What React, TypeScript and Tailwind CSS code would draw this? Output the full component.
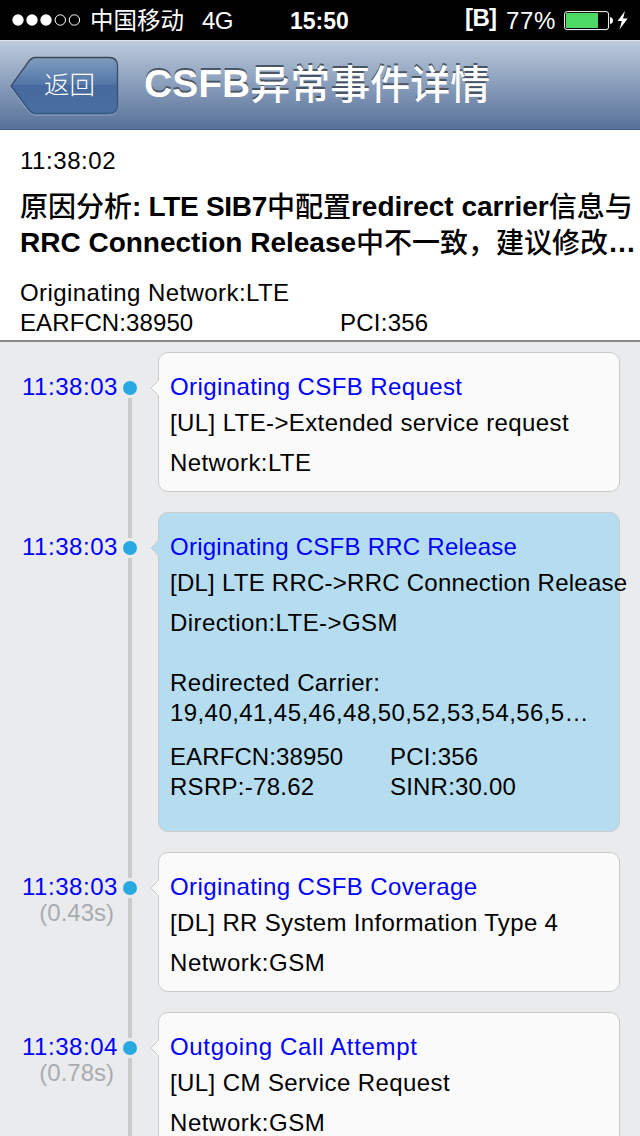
import type { ReactNode } from "react";

type TimelineEvent = {
  time: string;
  delta?: string;
  title: string;
  message: string;
  detail: string;
  selected?: boolean;
  tracking: [string, string, string];
};

const events: TimelineEvent[] = [
  {
    time: "11:38:03",
    title: "Originating CSFB Request",
    message: "[UL] LTE->Extended service request",
    detail: "Network:LTE",
    tracking: ["tracking-[0.4px]", "tracking-[0.39px]", "tracking-[0.4px]"],
  },
  {
    time: "11:38:03",
    title: "Originating CSFB RRC Release",
    message: "[DL] LTE RRC->RRC Connection Release",
    detail: "Direction:LTE->GSM",
    selected: true,
    tracking: ["tracking-[0.25px]", "tracking-[0.25px]", "tracking-[0.42px]"],
  },
  {
    time: "11:38:03",
    delta: "(0.43s)",
    title: "Originating CSFB Coverage",
    message: "[DL] RR System Information Type 4",
    detail: "Network:GSM",
    tracking: ["tracking-[0.4px]", "tracking-[0.34px]", "tracking-[0.55px]"],
  },
  {
    time: "11:38:04",
    delta: "(0.78s)",
    title: "Outgoing Call Attempt",
    message: "[UL] CM Service Request",
    detail: "Network:GSM",
    tracking: ["tracking-[0.67px]", "tracking-[0.4px]", "tracking-[0.55px]"],
  },
];

function StatusBar() {
  return (
    <div className="flex h-10 shrink-0 items-center bg-black text-[24px] leading-10 text-white">
      <svg className="ml-3 h-3 w-[70px] shrink-0" viewBox="0 0 70 12">
        {[6, 20, 34].map((x) => (
          <circle key={x} cx={x} cy="6" r="5.7" fill="white" />
        ))}
        {[48.3, 62.4].map((x) => (
          <circle key={x} cx={x} cy="6" r="5.2" fill="none" stroke="white" />
        ))}
      </svg>
      <span className="ml-2 w-[112px] pt-0.5 text-[23.5px] leading-[38px] font-normal">中国移动</span>
      <span className="w-[88px] pt-0.5 leading-[38px] tracking-[-0.5px]">4G</span>
      <span className="w-[175px] pt-0.5 text-[23px] leading-[38px] font-bold">15:50</span>
      <span className="w-[41px] pb-1 text-[24px] font-bold tracking-[-0.6px]">[B]</span>
      <span className="w-[58px] pt-0.5 leading-[38px] tracking-[0.7px]">77%</span>
      <svg className="h-6 w-[66px] shrink-0" viewBox="0 0 66 24">
        <rect x="0.6" y="3.6" width="44" height="18" rx="2.5" fill="none" stroke="white" />
        <rect x="2" y="5" width="32" height="15" fill="#4cd964" />
        <path d="M46 9q3 .5 3 3.5t-3 3.500z" fill="white" />
        <path d="M61 3l-7.500 10h4.300l-2.300 8.500 8.200-11h-4.600z" fill="white" />
      </svg>
    </div>
  );
}

function NavBar() {
  return (
    <div className="flex h-[90px] shrink-0 items-start border-t border-b border-t-[#dde3ea] border-b-[#415e8d] bg-linear-to-b from-[#bdcbdc] to-[#577199]">
      <div className="mt-[15px] ml-[10px] grid h-[60px] w-[109px]">
        <svg className="col-start-1 row-start-1" width="109" height="60" viewBox="0 0 109 60">
          <defs>
            <linearGradient id="back" x1="0" y1="0" x2="0" y2="1">
              <stop offset="0" stopColor="#809dc0" />
              <stop offset=".49" stopColor="#5275a7" />
              <stop offset=".5" stopColor="#466a9d" />
              <stop offset="1" stopColor="#496d9e" />
            </linearGradient>
            <linearGradient id="edge" x1="0" y1="0" x2="0" y2="1">
              <stop offset="0" stopColor="#3a4656" />
              <stop offset="1" stopColor="#34588a" />
            </linearGradient>
          </defs>
          <path d="M25 2H99q8 0 8 8V51q0 8-8 8H25q-4 0-7-4L.7 31.500 18 7q3-4 7-4z" fill="none" stroke="#93a6c0" />
          <path d="M25 1.500H99q8.500 0 8.500 8.500V49q0 8.500-8.500 8.500H25q-3 0-6-3.500L1 30 19 5q3-3.500 6-3.500z" fill="url(#back)" stroke="url(#edge)" strokeWidth="1.300" />
        </svg>
        <span className="z-10 col-start-1 row-start-1 self-center pb-0.5 pl-[34px] text-[25.5px] leading-[30px] font-light text-white">返回</span>
      </div>
      <h1 className="ml-[25px] pt-[13px] text-[40px] leading-[60px] font-bold whitespace-nowrap text-white [text-shadow:0_-2px_0_#4b5665]">
        <span className="relative -top-px text-[39px]">CSFB</span>
        <span className="relative top-px font-medium">异常事件详情</span>
      </h1>
    </div>
  );
}

function Cjk({ children }: { children: ReactNode }) {
  return <span className="relative top-px font-medium tracking-normal">{children}</span>;
}

function Summary() {
  return (
    <div className="flex h-[212px] shrink-0 flex-col border-b-2 border-[#8a8a8a] bg-white pt-4 pl-5 whitespace-nowrap">
      <span className="leading-[30px] tracking-[0.55px]">11:38:02</span>
      <div className="mt-[13px] text-[28px] leading-9 font-bold">
        <div>
          <Cjk>原因分析</Cjk>
          <span className="tracking-[-0.3px]">: LTE SIB7</span>
          <Cjk>中配置</Cjk>redirect carrier<Cjk>信息与</Cjk>
        </div>
        <div>
          RRC Connection Release<Cjk>中不一致，建议修改</Cjk>…
        </div>
      </div>
      <span className="mt-[17px] leading-[30px] tracking-[0.43px]">Originating Network:LTE</span>
      <div className="grid grid-cols-[320px_1fr] leading-[30px]">
        <span className="tracking-[0.1px]">EARFCN:38950</span>
        <span className="tracking-[0.25px]">PCI:356</span>
      </div>
    </div>
  );
}

function EventRow({ event }: { event: TimelineEvent }) {
  const { selected, tracking } = event;
  return (
    <div className="flex shrink-0">
      <div className="flex w-[118px] flex-col items-end leading-[26px] whitespace-nowrap">
        <span className="-mt-1 tracking-[0.55px] text-[#0000fe]">{event.time}</span>
        {event.delta && <span className="pr-[4px] text-[#a9abb0]">{event.delta}</span>}
      </div>
      <div className="ml-[5px] flex w-[14px] flex-col items-center">
        <div className="flex h-5 items-center">
          <i className="size-[14px] rounded-full bg-[#29a9e1]" />
        </div>
        <div className="w-1 flex-1 bg-[#cbcbcb]" />
      </div>
      <div
        className={`relative mt-[-26px] mb-[46px] ml-[21px] flex w-[462px] flex-col rounded-[10px] border border-[#cbcbcb] px-[11px] pt-[19px] leading-[30px] whitespace-nowrap ${
          selected ? "h-[320px] bg-[#b5ddef]" : "h-[140px] bg-[#fafafa]"
        }`}
      >
        <svg
          className={`absolute top-[26px] left-[-9px] ${selected ? "text-[#b5ddef]" : "text-[#fafafa]"}`}
          width="10"
          height="18"
          viewBox="0 0 10 18"
        >
          <path d="M9 1L1 9l8 8" fill="currentColor" stroke="#cbcbcb" />
          <path d="M8.500 2h1.500v14h-1.500z" fill="currentColor" />
        </svg>
        <span className={`text-[#0000fe] ${tracking[0]}`}>{event.title}</span>
        <span className={`mt-1.5 ${tracking[1]}`}>{event.message}</span>
        <span className={`mt-2.5 ${tracking[2]}`}>{event.detail}</span>
        {selected && (
          <>
            <span className="mt-[30px] tracking-[0.4px]">Redirected Carrier:</span>
            <span className="tracking-[0.42px]">19,40,41,45,46,48,50,52,53,54,56,5…</span>
            <div className="mt-3.5 grid grid-cols-[220px_1fr]">
              <span className="tracking-[0.1px]">EARFCN:38950</span>
              <span className="tracking-[0.25px]">PCI:356</span>
              <span className="tracking-[0.28px]">RSRP:-78.62</span>
              <span className="tracking-[0.2px]">SINR:30.00</span>
            </div>
          </>
        )}
      </div>
    </div>
  );
}

export default function App() {
  return (
    <div className="flex h-[1136px] w-[640px] flex-col overflow-hidden bg-[#eaebed] font-['Liberation_Sans','Noto_Sans_CJK_SC',sans-serif] text-[24px] text-black">
      <StatusBar />
      <NavBar />
      <Summary />
      <div className="flex min-h-0 flex-1 flex-col overflow-hidden pt-9">
        {events.map((event, i) => (
          <EventRow key={i} event={event} />
        ))}
      </div>
    </div>
  );
}
